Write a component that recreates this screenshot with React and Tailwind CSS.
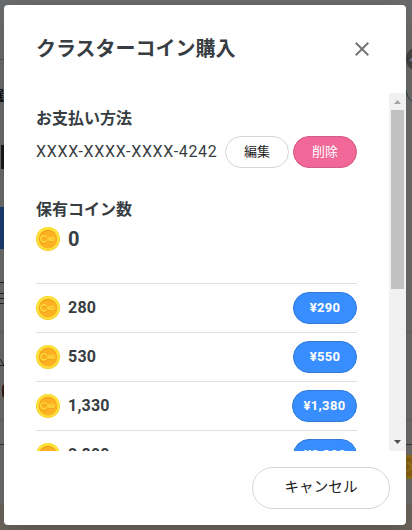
import React from 'react';
import { MdClose } from 'react-icons/md';

const plans = [
  { coins: '280', price: '¥290', width: 'w-16' },
  { coins: '530', price: '¥550', width: 'w-16' },
  { coins: '1,330', price: '¥1,380', width: 'w-[65px]' },
  { coins: '2,800', price: '¥2,890', width: 'w-16' },
];

const Coin = () => (
  <svg viewBox="0 0 24 24" className="w-6 h-6 shrink-0">
    <circle cx="12" cy="12" r="12" fill="#f5cd28" />
    <circle cx="12" cy="11.5" r="11.5" fill="#fde03a" />
    <circle cx="12" cy="12" r="9.2" fill="#f39f1c" />
    <circle cx="12.2" cy="12.6" r="8.7" fill="#fdb022" />
    <g fill="none" strokeLinecap="round" strokeLinejoin="round">
      <path
        d="M10.2 10.5A3.1 3.1 0 1 0 10.2 14.7M13 12.6m-1.2 0a1.2 1.2 0 1 0 2.4 0a1.2 1.2 0 1 0 -2.4 0M16.4 12.6m-1.6 0a1.6 1.6 0 1 0 3.2 0a1.6 1.6 0 1 0 -3.2 0"
        stroke="#ee9a1b"
        strokeWidth="2"
      />
      <path
        d="M10.2 9.8A3.1 3.1 0 1 0 10.2 14M13 12m-1.2 0a1.2 1.2 0 1 0 2.4 0a1.2 1.2 0 1 0 -2.4 0M16.4 12m-1.6 0a1.6 1.6 0 1 0 3.2 0a1.6 1.6 0 1 0 -3.2 0"
        stroke="#fcd335"
        strokeWidth="1.8"
      />
    </g>
  </svg>
);

// Page content dimmed behind the dialog
const Backdrop = () => (
  <div className="flex flex-col w-full h-full bg-[#6e6d6b] overflow-hidden">
    <div className="h-[15px] shrink-0 bg-[#6a6b6d]" />
    <div className="flex justify-between items-start h-[74px] shrink-0">
      <div className="w-1 h-px mt-11 bg-[#555]" />
      <svg viewBox="0 0 24 24" className="w-6 h-6 mt-8 -mr-[18px]">
        <circle cx="12" cy="12" r="12" fill="#444445" />
        <path d="M3 14L7 9V14Z" fill="#6b7f98" />
      </svg>
    </div>
    <div className="flex justify-between h-14 shrink-0">
      <span className="w-4 -ml-[9px] text-[13px] leading-[14px] font-bold text-[#111]">選</span>
      <svg viewBox="0 0 6 14" className="w-1.5 h-3.5">
        <path d="M0 1Q1 9 6 12" fill="none" stroke="#2d4654" />
      </svg>
    </div>
    <div className="ml-px w-1 h-6 shrink-0 bg-[#1c1a17]" />
    <div className="mt-[38px] w-1 h-[42px] shrink-0 bg-[#1b3f73]" />
    <div className="mt-[33px] w-1 h-px shrink-0 bg-[#222]" />
    <div className="mt-2.5 w-1 h-px shrink-0 bg-[#222]" />
    <div className="mt-1 w-1 h-px shrink-0 bg-[#222]" />
    <div className="mt-1 w-1 h-px shrink-0 bg-[#222]" />
    <div className="mt-7 h-px shrink-0 bg-[#5e5e5e]" />
    <svg viewBox="0 0 4 10" className="mt-6 w-1 h-2.5 shrink-0">
      <path d="M0 2L4 8.5M0 8.5H4" fill="none" stroke="#252525" />
    </svg>
    <div className="mt-[17px] ml-0.5 w-2 h-3.5 shrink-0 rounded-full bg-[#351a10]" />
    <div className="mt-[21px] h-px shrink-0 bg-[#5e5e5e]" />
    <div className="mt-6 h-px shrink-0 bg-[#343434]" />
    <svg viewBox="0 0 6 24" className="mt-2.5 w-1.5 h-6 shrink-0 self-end">
      <path d="M0 0H6V24H0Z" fill="#8d7215" />
      <path d="M0 3H6V21H0Z" fill="#896011" />
      <path d="M0 8Q4 7 5 11T0 16" fill="none" stroke="#9a7c1b" strokeWidth="1.5" />
    </svg>
    <div className="mt-[25px] grow bg-[#6d665e]" />
  </div>
);

const ScrollBar = () => (
  <div className="flex flex-col items-center w-[17px] h-full shrink-0 bg-[#f1f1f1]">
    <svg viewBox="0 0 17 17" className="w-[17px] h-[17px] shrink-0">
      <path d="M5 11L8.5 7L12 11Z" fill="#a3a3a3" />
    </svg>
    <div className="w-[13px] h-[179px] bg-[#c1c1c1]" />
    <svg viewBox="0 0 17 17" className="w-[17px] h-[17px] shrink-0 mt-auto">
      <path d="M5 6L8.5 10L12 6Z" fill="#505050" />
    </svg>
  </div>
);

const Dialog = () => (
  <div className="flex flex-col w-[402px] h-[520px] rounded bg-white text-[#373d42] shadow-[0_8px_24px_rgba(0,0,0,0.2)]">
    <header className="flex items-center justify-between h-[88px] shrink-0 pl-8 pr-8">
      <h1 className="text-xl leading-7 font-bold">クラスターコイン購入</h1>
      <button className="text-[#757575]">
        <MdClose size={24} />
      </button>
    </header>

    <div className="flex h-[358px] shrink-0 overflow-hidden">
      <div className="flex flex-col grow px-8 pt-3.5">
        <h2 className="h-6 text-base leading-6 font-bold">お支払い方法</h2>
        <div className="flex items-center h-8 mt-[5px] gap-1">
          <p className="w-[185px] text-base leading-6 tracking-[0.68px] whitespace-nowrap">XXXX-XXXX-XXXX-4242</p>
          <button className="w-16 h-8 shrink-0 rounded-full border border-[#d5d6d7] text-[13px] text-[#222]">編集</button>
          <button className="w-16 h-8 shrink-0 rounded-full border border-[#d75b87] bg-[#f16798] text-[13px] text-white">削除</button>
        </div>

        <h2 className="h-6 mt-[30px] text-base leading-6 font-bold">保有コイン数</h2>
        <div className="flex items-center h-8 mt-1 mb-[29px] -translate-y-px gap-2">
          <Coin />
          <span className="text-xl font-bold">0</span>
        </div>

        <ul>
          {plans.map((plan) => (
            <li key={plan.coins} className="flex items-center h-[49px] border-t border-[#dedfe0]">
              <Coin />
              <span className="ml-2 text-base font-bold tracking-[0.2px]">{plan.coins}</span>
              <button
                className={`${plan.width} ml-auto h-8 rounded-full border border-[#2f7ad5] bg-[#388eff] text-[13px] font-bold tracking-[0.35px] text-white`}
              >
                {plan.price}
              </button>
            </li>
          ))}
        </ul>
      </div>
      <ScrollBar />
    </div>

    <footer className="flex justify-end p-4">
      <button className="w-[138px] h-[42px] rounded-full border border-[#d5d6d7] text-[14.6px] text-[#222]">キャンセル</button>
    </footer>
  </div>
);

const App = () => {
  return (
    <main className="relative w-[412px] h-[530px] overflow-hidden font-['Roboto','Noto_Sans_CJK_JP',sans-serif]">
      <Backdrop />
      <div className="absolute inset-0 pt-[5px] pl-1">
        <Dialog />
      </div>
    </main>
  );
};

export default App;
